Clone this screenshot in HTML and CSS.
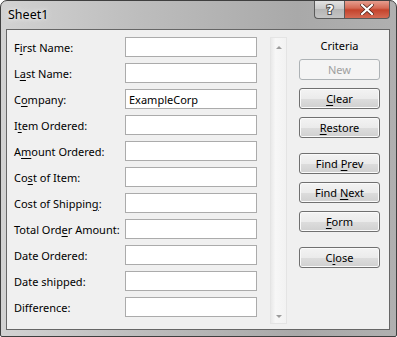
FILE: index.html
```html
<!DOCTYPE html>
<html lang="en">
<head>
  <meta charset="UTF-8">
  <title>Sheet1</title>
  <link rel="stylesheet" href="styles.css">
</head>
<body>
<div class="window">
  <div class="titlebar">
    <span class="title">Sheet1</span>
    <div class="caption-buttons">
      <span class="cap-btn help">
        <svg width="14" height="14" viewBox="0 0 14 14">
          <text x="7" y="12" text-anchor="middle" class="help-glyph">?</text>
        </svg>
      </span>
      <span class="cap-btn close">
        <svg width="14" height="11" viewBox="0 0 14 11">
          <path d="M2 1 L12 10 M12 1 L2 10" stroke="#4a2018" stroke-width="3.6" stroke-linecap="square"/>
          <path d="M2 1 L12 10 M12 1 L2 10" stroke="#ffffff" stroke-width="2.2" stroke-linecap="square"/>
        </svg>
      </span>
    </div>
  </div>

  <div class="client">
    <div class="fields">
      <div class="row"><label>F<u>i</u>rst Name:</label><input type="text"></div>
      <div class="row"><label>L<u>a</u>st Name:</label><input type="text"></div>
      <div class="row"><label>C<u>o</u>mpany:</label><input type="text" value="ExampleCorp"></div>
      <div class="row"><label>I<u>t</u>em Ordered:</label><input type="text"></div>
      <div class="row"><label>A<u>m</u>ount Ordered:</label><input type="text"></div>
      <div class="row"><label>Co<u>s</u>t of Item:</label><input type="text"></div>
      <div class="row"><label>Cost of Shippin<u>g</u>:</label><input type="text"></div>
      <div class="row"><label>Total Ord<u>e</u>r Amount:</label><input type="text"></div>
      <div class="row"><label>Date Ordered:</label><input type="text"></div>
      <div class="row"><label>Date shipped:</label><input type="text"></div>
      <div class="row"><label>Difference:</label><input type="text"></div>
    </div>

    <div class="scrollbar">
      <span class="arrow up"></span>
      <span class="arrow down"></span>
    </div>

    <div class="actions">
      <div class="criteria">Criteria</div>
      <button disabled>New</button>
      <button><u>C</u>lear</button>
      <button><u>R</u>estore</button>
      <button class="spaced">Find <u>P</u>rev</button>
      <button>Find <u>N</u>ext</button>
      <button><u>F</u>orm</button>
      <button class="spaced">C<u>l</u>ose</button>
    </div>
  </div>
</div>
</body>
</html>
```

FILE: styles.css
```css
body {
    margin: 0;
    font-family: "Noto Sans", "Open Sans", sans-serif;
    font-size: 11px;
    background-color: #ffffff;
}
.window {
    width: 397px;
    height: 337px;
    box-sizing: border-box;
    border: 1px solid #3f3f3f;
    border-radius: 7px 7px 2px 2px;
    background: linear-gradient(to right, #d2d2d2, #bdbdbd 35%, #a9a9a9 75%, #b0b0b0);
    display: flex;
    flex-direction: column;
    overflow: hidden;
}
.titlebar {
    height: 28px;
    display: flex;
    justify-content: space-between;
    align-items: flex-start;
    padding-left: 7px;
    padding-right: 6px;
}
.title {
    margin-top: 5px;
    color: #000000;
    font-size: 12.5px;
    text-shadow: 0 0 6px #f4f4f4, 0 0 3px #ececec;
}
.caption-buttons {
    display: flex;
    margin-top: -1px;
}
.cap-btn {
    height: 19px;
    box-sizing: border-box;
    border: 1px solid #5a5a5a;
    border-top: none;
    display: flex;
    align-items: center;
    justify-content: center;
}
.help {
    width: 30px;
    border-radius: 0 0 0 4px;
    background: linear-gradient(#e6e6e6, #c9c9c9 50%, #b5b5b5 51%, #c4c4c4);
    border-right: none;
}
.help-glyph {
    font-family: "DejaVu Sans", sans-serif;
    font-weight: bold;
    font-size: 13px;
    fill: #ffffff;
    stroke: #4a4a4a;
    stroke-width: 2px;
    paint-order: stroke fill;
}
.close {
    width: 46px;
    border-radius: 0 0 4px 0;
    background: linear-gradient(#e8a597, #d46a55 45%, #c4432c 55%, #d46a54);
}
.client {
    flex: 1;
    margin: 0 6px 6px 5px;
    border: 1px solid #666666;
    background-color: #f0f0f0;
    display: flex;
    padding: 7px 0 5px 7px;
}
.fields {
    display: flex;
    flex-direction: column;
    gap: 6px;
}
.row {
    display: flex;
    align-items: center;
    height: 20px;
}
.row label {
    width: 111px;
    white-space: nowrap;
    color: #000000;
}
u {
    text-underline-offset: 2px;
}
.row input {
    width: 132px;
    height: 20px;
    box-sizing: border-box;
    margin: 0;
    border: 1px solid #ababab;
    background-color: #ffffff;
    font-family: inherit;
    font-size: 11px;
    padding: 0 3px;
    color: #000000;
    outline: none;
}
.scrollbar {
    width: 17px;
    margin-left: 13px;
    box-sizing: border-box;
    border: 1px solid #e4e4e4;
    background: linear-gradient(to right, #e9e9e9, #f7f7f7 30%, #f2f2f2);
    display: flex;
    flex-direction: column;
    justify-content: space-between;
    align-items: center;
    padding: 8px 0 5px;
}
.arrow {
    width: 0;
    height: 0;
    border-left: 3px solid transparent;
    border-right: 3px solid transparent;
}
.arrow.up {
    border-bottom: 3px solid #9c9c9c;
}
.arrow.down {
    border-top: 3px solid #9c9c9c;
}
.actions {
    display: flex;
    flex-direction: column;
    margin-left: 12px;
    width: 81px;
}
.criteria {
    height: 16px;
    margin: 1px 0 5px;
    text-align: center;
    color: #000000;
}
.actions button {
    height: 21px;
    margin-bottom: 8px;
    border: 1px solid #707070;
    border-radius: 3px;
    background: linear-gradient(#f3f3f3, #ebebeb 50%, #dddddd 51%, #d0d0d0);
    font-family: inherit;
    font-size: 11px;
    color: #000000;
    padding: 0;
    box-shadow: inset 0 0 0 1px #fafafa;
}
.actions button:disabled {
    border-color: #adb2b5;
    background: #f4f4f4;
    color: #a0a0a0;
    box-shadow: none;
}
.actions button.spaced {
    margin-top: 7px;
}
```
